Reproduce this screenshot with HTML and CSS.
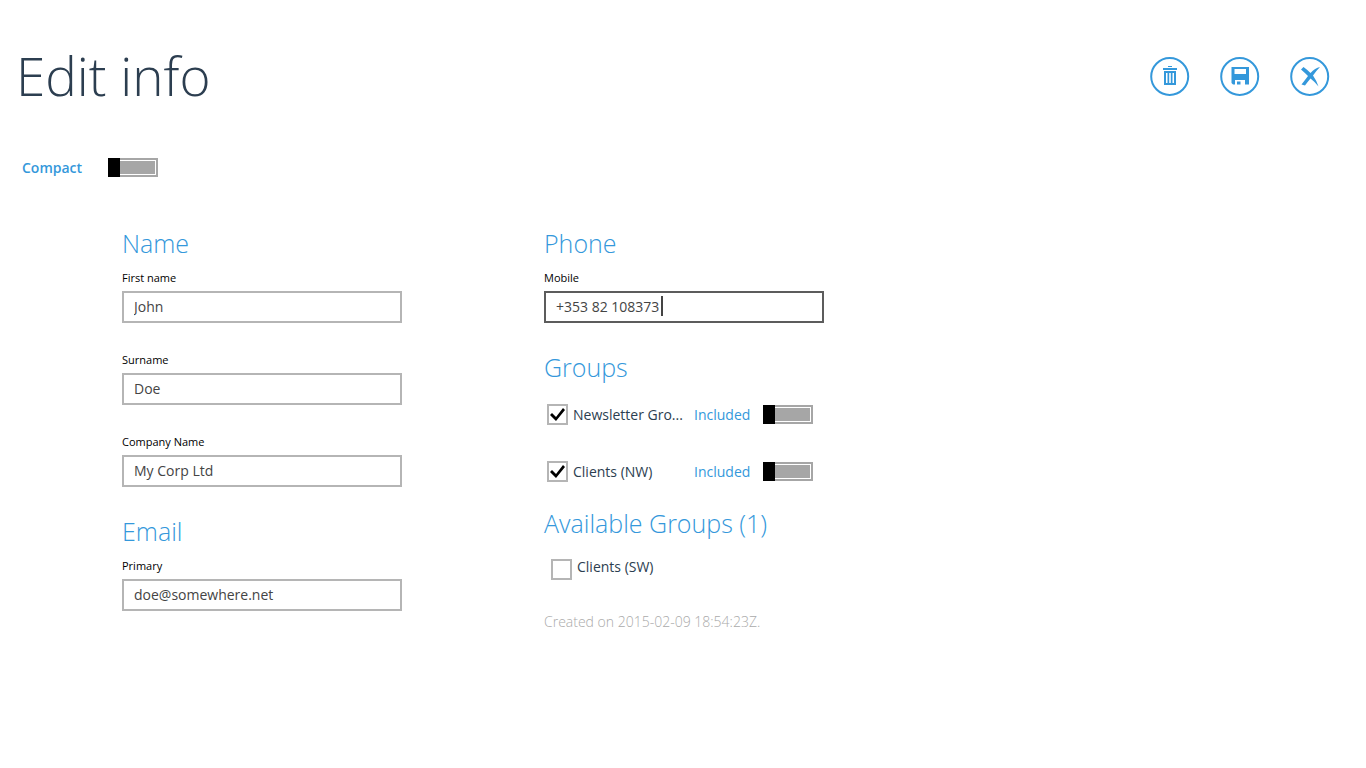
FILE: index.html
```html
<!doctype html>
<html lang="en">
<head>
  <meta charset="utf-8" />
  <meta name="viewport" content="width=device-width,initial-scale=1" />
  <title>Edit info</title>
  <link rel="stylesheet" href="styles.css">
</head>
<body>

<header class="page-header">
  <h1>Edit info</h1>
  <div class="actions">
    <button class="icon-btn" type="button" aria-label="Delete">
      <svg viewBox="0 0 40 40" aria-hidden="true">
        <circle class="ring" cx="19.700" cy="20.500" r="18.500"/>
        <path d="M18 10h4v1h-4zM13 12h14v2H13zM14 15h12v14H14zM16 17v10h1.500V17zM19.200 17v10h1.600V17zM22.500 17v10H24V17z" fill-rule="evenodd"/>
      </svg>
    </button>
    <button class="icon-btn" type="button" aria-label="Save">
      <svg viewBox="0 0 40 40" aria-hidden="true">
        <circle class="ring" cx="19.700" cy="20.500" r="18.500"/>
        <path d="M11.500 11H29v17.500h-4V24H15v4.500h-2L11.500 27zM14.500 13v5h11.500v-5zM17 25.500h3.500v3H17z" fill-rule="evenodd"/>
      </svg>
    </button>
    <button class="icon-btn" type="button" aria-label="Cancel">
      <svg viewBox="0 0 40 40" aria-hidden="true">
        <circle class="ring" cx="19.700" cy="20.500" r="18.500"/>
        <path d="M11 13.500L13.500 11Q17 13.500 20.500 17Q25 12 30 11Q26.500 14.500 23 19.500Q26.500 24.500 28.500 30.500Q24.500 25.500 20.500 22.500Q17.500 26 15 29.500L11.500 28.500Q15 24 18 20Q14.500 16.500 11 13.500z"/>
      </svg>
    </button>
  </div>
</header>

<div class="compact">
  <label for="compact">Compact</label>
  <input class="toggle" type="checkbox" role="switch" id="compact">
</div>

<form class="columns">
  <div class="column">
    <section>
      <h2>Name</h2>
      <div class="field">
        <label for="firstName">First name</label>
        <input type="text" id="firstName" value="John">
      </div>
      <div class="field">
        <label for="surname">Surname</label>
        <input type="text" id="surname" value="Doe">
      </div>
      <div class="field">
        <label for="company">Company Name</label>
        <input type="text" id="company" value="My Corp Ltd">
      </div>
    </section>
    <section>
      <h2>Email</h2>
      <div class="field">
        <label for="email">Primary</label>
        <input type="text" id="email" value="doe@somewhere.net">
      </div>
    </section>
  </div>

  <div class="column">
    <section>
      <h2>Phone</h2>
      <div class="field active">
        <label for="mobile">Mobile</label>
        <input type="text" id="mobile" value="+353 82 108373">
        <span class="caret"></span>
      </div>
    </section>
    <section>
      <h2>Groups</h2>
      <div class="group">
        <input class="check" type="checkbox" id="newsletter" checked>
        <label class="group-name" for="newsletter">Newsletter Gro...</label>
        <label class="state" for="newsletterOn">Included</label>
        <input class="toggle" type="checkbox" role="switch" id="newsletterOn">
      </div>
      <div class="group">
        <input class="check" type="checkbox" id="clientsNw" checked>
        <label class="group-name" for="clientsNw">Clients (NW)</label>
        <label class="state" for="clientsNwOn">Included</label>
        <input class="toggle" type="checkbox" role="switch" id="clientsNwOn">
      </div>
    </section>
    <section>
      <h2>Available Groups (1)</h2>
      <div class="available">
        <input class="check" type="checkbox" id="clientsSw">
        <label class="group-name" for="clientsSw">Clients (SW)</label>
      </div>
    </section>
    <p class="created">Created on 2015-02-09 18:54:23Z.</p>
  </div>
</form>

</body>
</html>
```
FILE: styles.css
```css
:root{
  --accent:#3498db;
  --dark:#2c3e50;
  --line:#b5b5b5;
  --track:#a6a6a6;
}

*{box-sizing:border-box;margin:0;padding:0}

body{
  font-family:"Open Sans","Noto Sans",sans-serif;
  font-size:14px;
  line-height:20px;
  color:var(--dark);
  background:white;
}

.page-header{
  display:flex;
  justify-content:space-between;
  align-items:center;
  padding:36px 36px 0 16px;
}

h1{font-size:53px;line-height:80px;font-weight:300}
h2{font-size:25px;line-height:34px;font-weight:300;color:var(--accent);white-space:nowrap}

.actions{display:flex;gap:30px}

.icon-btn{
  width:40px;height:40px;
  border:none;
  background:none;
  cursor:pointer;
}

.icon-btn svg{display:block;width:40px;height:40px;fill:var(--accent)}
.icon-btn .ring{fill:none;stroke:var(--accent);stroke-width:2}

.compact{
  display:flex;
  align-items:flex-start;
  gap:26px;
  margin:42px 0 0 22px;
  font-weight:600;
  color:var(--accent);
}

.columns{
  display:grid;
  grid-template-columns:280px 280px;
  gap:142px;
  margin:48px 0 0 122px;
}

.column{display:flex;flex-direction:column;gap:24px}

.field{position:relative;margin:10px 0 3px}
.field + .field{margin-top:29px}

.field label{
  display:block;
  margin-bottom:5px;
  font-size:11px;
  line-height:16px;
  color:black;
}

.field input{
  display:block;
  width:100%;height:32px;
  padding:0 10px 2px;
  border:2px solid var(--line);
  background:white;
  font:inherit;
  color:#444;
  outline:none;
}

.field.active input,.field input:focus{border-color:#5c5c5c}

.caret{
  position:absolute;
  left:117px;bottom:7px;
  width:2px;height:20px;
  background:#444;
}

.toggle{
  appearance:none;
  position:relative;
  width:50px;height:19px;
  padding:1px;
  border:2px solid var(--track);
  background:var(--track) content-box;
}

.toggle::before{
  content:"";
  position:absolute;
  top:-2px;left:-2px;
  width:12px;height:19px;
  background:black;
}

.toggle:checked::before{left:auto;right:-2px}

.check{
  appearance:none;
  flex:none;
  width:21px;height:21px;
  border:2px solid var(--line);
  background:white;
}

.check:checked::before{
  content:"";
  display:block;
  width:17px;height:17px;
  background:black;
  clip-path:polygon(1px 9px,3px 7px,7px 11px,14px 2px,16px 4px,7px 15px);
}

.group{
  display:flex;
  align-items:center;
  height:21px;
  margin:20px 0 36px 3px;
}

.group:last-child{margin-bottom:0}

.group-name{
  width:112px;
  margin-left:5px;
  white-space:nowrap;
}

.state{width:56px;margin:0 13px 0 9px;color:var(--accent)}

.available{display:flex;align-items:flex-end;margin:17px 0 0 7px}
.available .group-name{margin-bottom:3px}

.created{margin-top:8px;font-weight:300;color:#aaa}

@media(max-width:860px){
  .columns{grid-template-columns:minmax(0,280px);gap:24px;margin-left:22px}
}
```
